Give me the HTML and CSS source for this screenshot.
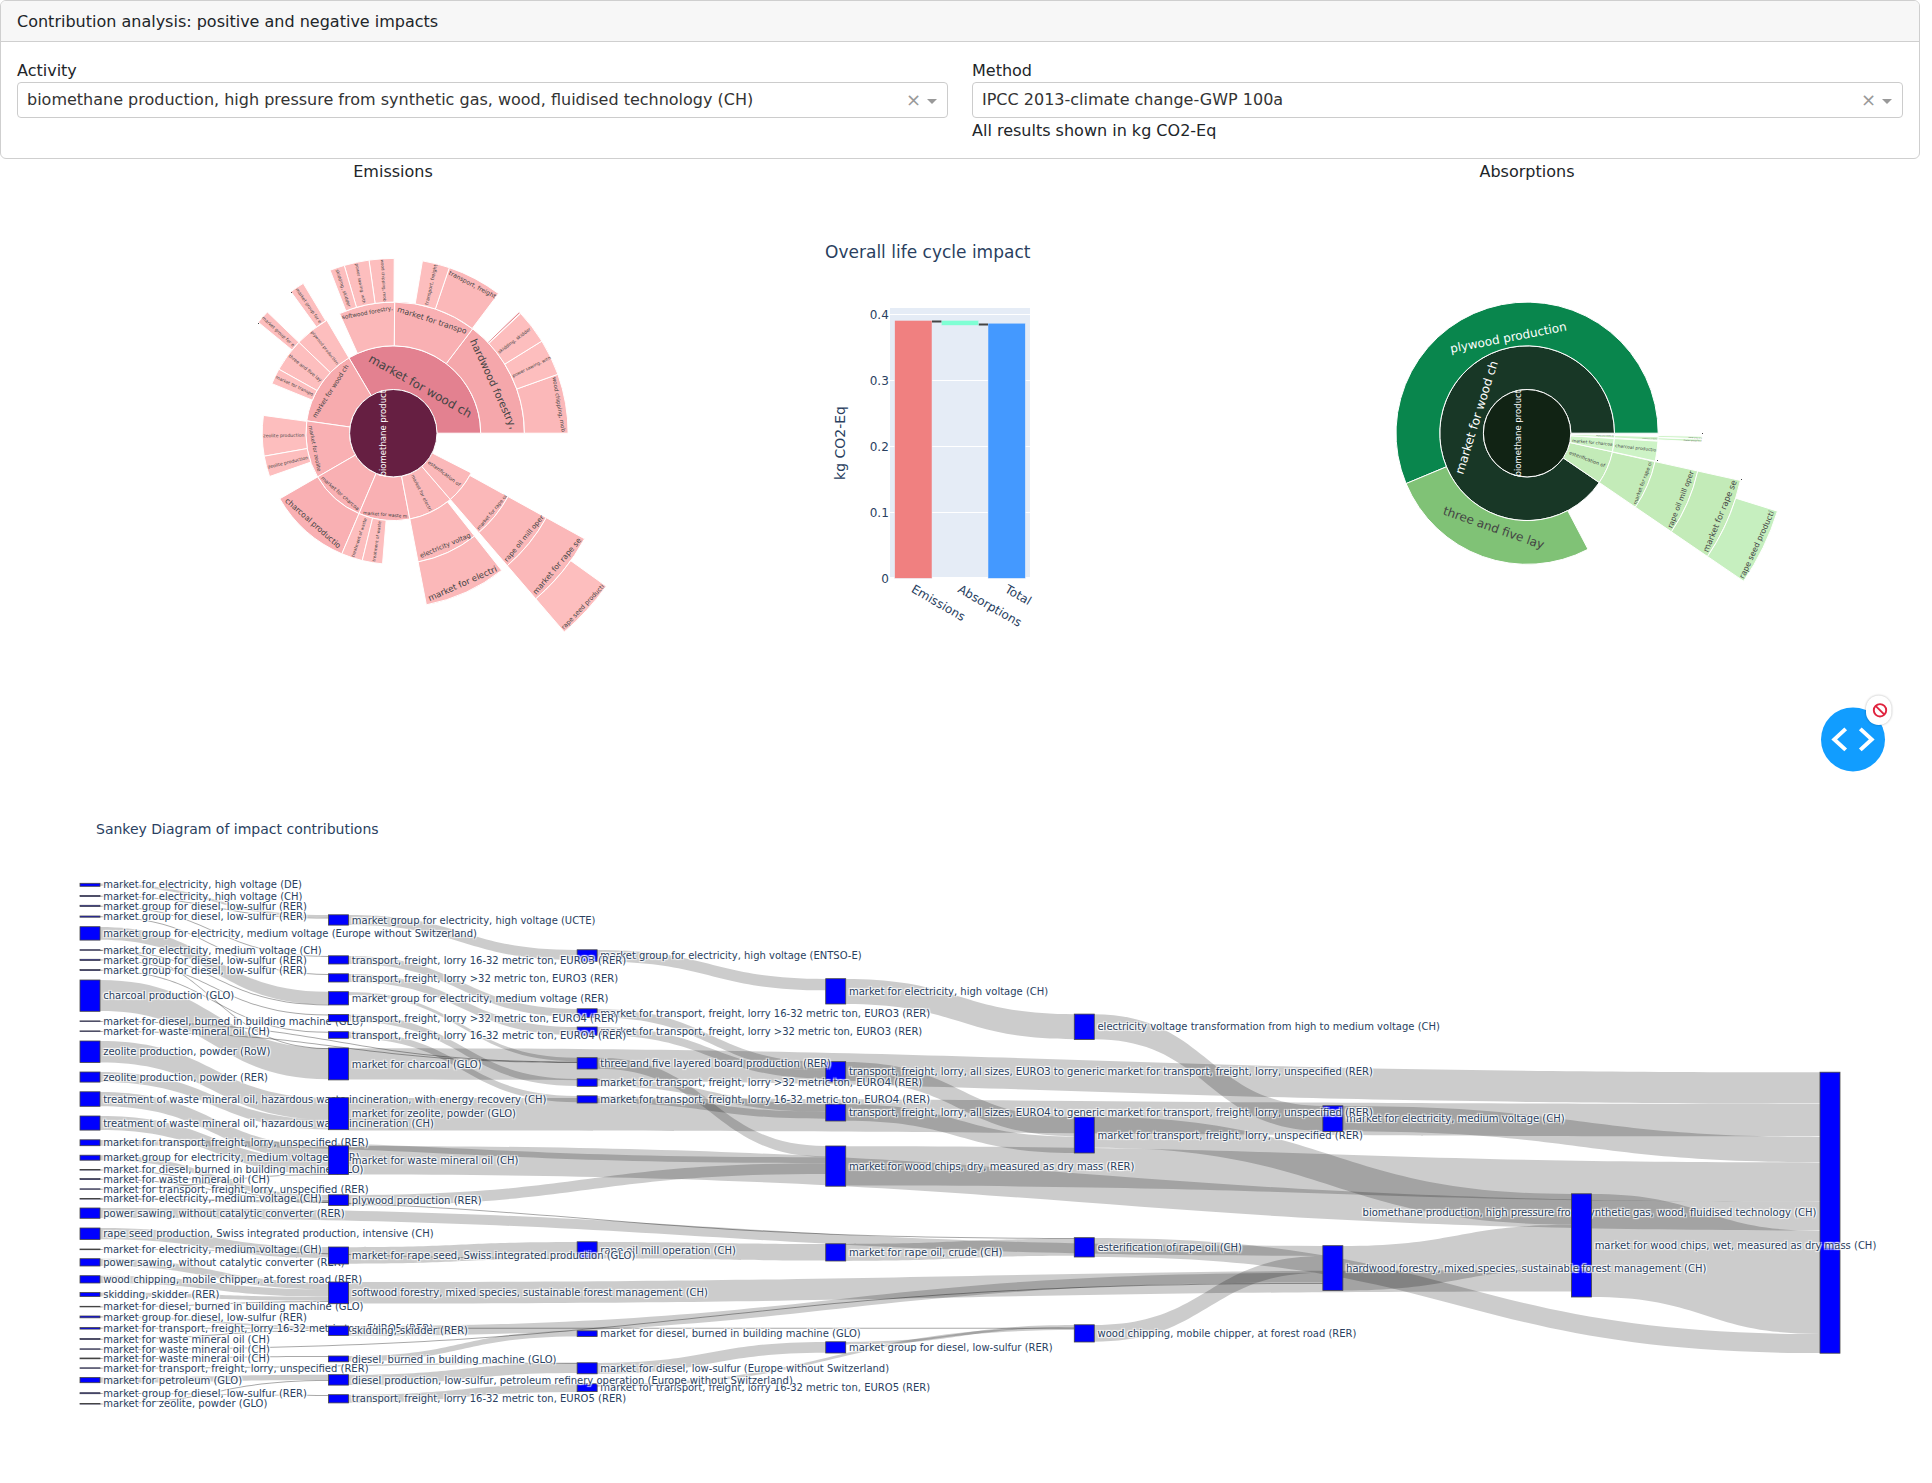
FILE: index.html
```html
<!DOCTYPE html>
<html lang="en">
<head>
<meta charset="utf-8">
<title>Contribution analysis</title>
<link rel="stylesheet" href="styles.css">
</head>
<body>
<main class="page">
  <section class="card">
    <header class="card-header">Contribution analysis: positive and negative impacts</header>
    <div class="card-body">
      <div class="field">
        <label>Activity</label>
        <div class="select"><span class="value">biomethane production, high pressure from synthetic gas, wood, fluidised technology (CH)</span><span class="clear">×</span><span class="arrow"></span></div>
      </div>
      <div class="field">
        <label>Method</label>
        <div class="select"><span class="value">IPCC 2013-climate change-GWP 100a</span><span class="clear">×</span><span class="arrow"></span></div>
        <div class="note">All results shown in kg CO2-Eq</div>
      </div>
    </div>
  </section>
  <section class="charts">
    <div class="chart-side">
      <div class="chart-title">Emissions</div>
      <svg id="emissions" class="chart" width="786" height="600" viewBox="0 183 786 600"></svg>
    </div>
    <svg id="overall" class="chart" width="348" height="624" viewBox="786 159 348 624">
      <rect x="890" y="308" width="140" height="270" fill="#e5ecf6"/>
      <path d="M890 314.5h140M890 380.5h140M890 446.5h140M890 512.5h140" stroke="#fff"/>
      <path d="M890 578h140" stroke="#fff" stroke-width="2"/>
      <g stroke="#e5ecf6" stroke-width=".5">
        <rect x="894.7" y="320.4" width="37.3" height="257.9" fill="#f08080"/>
        <rect x="941.3" y="320.4" width="37.4" height="5" fill="#7fffd4"/>
        <rect x="988" y="323.2" width="37.3" height="255.1" fill="#4499ff"/>
      </g>
      <path d="M932 321.5h9.4M978.8 324.5h9.2" stroke="#444" stroke-width="2"/>
      <text class="plot-title" x="825.1" y="257.9">Overall life cycle impact</text>
      <g class="tick" text-anchor="end">
        <text x="888.8" y="319">0.4</text><text x="888.8" y="385">0.3</text><text x="888.8" y="450.7">0.2</text><text x="888.8" y="516.6">0.1</text><text x="888.8" y="582.5">0</text>
      </g>
      <g class="tick">
        <text transform="translate(910.5 591.5) rotate(30)">Emissions</text>
        <text transform="translate(957 591.5) rotate(30)">Absorptions</text>
        <text transform="translate(1004 591.5) rotate(30)">Total</text>
      </g>
      <text class="axis-title" text-anchor="middle" transform="translate(844.8 443) rotate(-90)">kg CO2-Eq</text>
    </svg>
    <div class="chart-side">
      <div class="chart-title">Absorptions</div>
      <svg id="absorptions" class="chart" width="786" height="600" viewBox="1134 183 786 600"></svg>
    </div>
  </section>
  <svg id="sankey" class="chart" width="1920" height="700" viewBox="0 783 1920 700">
    <text class="sankey-title" x="96" y="833.5">Sankey Diagram of impact contributions</text>
  </svg>
</main>
<svg class="debug" width="90" height="90" viewBox="1815 690 90 90">
  <circle cx="1853" cy="739.4" r="32" fill="#119dff"/>
  <path d="M1845.7 728.9L1834.3 739.4L1845.7 749.9M1860.3 728.9L1871.7 739.4L1860.3 749.9" fill="none" stroke="#fff" stroke-width="4"/>
  <rect class="badge" x="1866" y="695.6" width="25.5" height="29.5" rx="12.75"/>
  <circle cx="1880" cy="710.3" r="6.2" fill="none" stroke="#e0233e" stroke-width="1.9"/>
  <path d="M1875.6 705.9l8.8 8.8" stroke="#e0233e" stroke-width="1.9"/>
</svg>
<script src="charts.js"></script>
</body>
</html>
```
FILE: styles.css
```css
* { box-sizing: border-box; }
body { margin: 0; background: #fff; color: #212529; font: 16px/24px "DejaVu Sans", sans-serif; overflow: hidden; }
.page { width: 1920px; display: flex; flex-direction: column; }
.card { height: 159px; border: 1px solid #cfcfcf; border-radius: 6px; overflow: hidden; }
.card-header { height: 41px; padding: 9px 16px 7px; background: #f7f7f7; border-bottom: 1px solid #cfcfcf; }
.card-body { display: flex; gap: 24px; padding: 16px; }
.field { flex: 1; }
.field label { display: block; padding-top: 1px; line-height: 23px; }
.field label, .note, .chart-title { height: 24px; line-height: 26px; padding: 0; }
.select { display: flex; align-items: center; height: 36px; padding: 0 10px 0 9px; border: 1px solid #ccc; border-radius: 4px; color: #333; }
.value { flex: 1; }
.clear { color: #999; font-size: 18px; line-height: 34px; margin-right: 6px; }
.arrow { border: 5px solid transparent; border-top-color: #999; border-bottom-width: 0; margin-top: 3px; }
.charts { display: flex; height: 624px; }
.chart-side { width: 786px; }
.chart-title { text-align: center; }
.chart { display: block; }
.plot-title { font-size: 17px; fill: #2a3f5f; }
.tick { font-size: 12px; fill: #2a3f5f; }
.axis-title { font-size: 14px; fill: #2a3f5f; }
.sankey-title { font-size: 14px; fill: #2a3f5f; }
.slice { stroke: #fff; stroke-width: 1; }
.link { fill: #000; fill-opacity: .2; }
.link.thin { fill-opacity: .34; }
.node { fill: #00f; stroke: #444; stroke-width: .8; }
.node-label { font-size: 10px; fill: #2a3f5f; text-shadow: -1px 1px 1px #fff, 1px 1px 1px #fff, 1px -1px 1px #fff, -1px -1px 1px #fff; }
.debug { position: absolute; left: 1815px; top: 690px; }
.badge { fill: #fff; filter: drop-shadow(0 0 1px rgba(0, 0, 0, .3)); }
```
FILE: charts.js
```js
const NS = "http://www.w3.org/2000/svg";
function add(parent, tag, attrs, text) {
  const el = document.createElementNS(NS, tag);
  for (const k in attrs) el.setAttribute(k, attrs[k]);
  if (text) el.textContent = text;
  parent.appendChild(el);
  return el;
}

/* ---- Sunbursts ---- */
const RING = 43.7;
// slices: [level, start angle, end angle, fill]
// labels: [text, x0, y0, x1, y1, fill], in thirds of a pixel from the origin
function sunburst(id, cx, cy, ox, oy, slices, labels, dots) {
  const svg = document.getElementById(id);
  for (const [level, a0, a1, fill] of slices) {
    if (level === 0) { add(svg, "circle", { class: "slice", cx, cy, r: RING, fill }); continue; }
    const r0 = level * RING, r1 = r0 + RING;
    const p = (r, a) => (cx + r * Math.cos(a * Math.PI / 180)).toFixed(2) + " " + (cy - r * Math.sin(a * Math.PI / 180)).toFixed(2);
    const big = a1 - a0 > 180 ? 1 : 0;
    add(svg, "path", { class: "slice", fill, d: `M${p(r0, a0)}L${p(r1, a0)}A${r1} ${r1} 0 ${big} 0 ${p(r1, a1)}L${p(r0, a1)}A${r0} ${r0} 0 ${big} 1 ${p(r0, a0)}Z` });
  }
  for (const [text, x0, y0, x1, y1, fill] of labels) {
    const len = Math.hypot(x1 - x0, y1 - y0) / 3;
    const angle = Math.atan2(y1 - y0, x1 - x0) * 180 / Math.PI;
    const g = add(svg, "g", {});
    const t = add(g, "text", { "font-size": 12, "text-anchor": "middle", y: 3.9, fill: fill || "#444" }, text);
    const s = len / t.getComputedTextLength();
    g.setAttribute("transform", `translate(${ox + (x0 + x1) / 6} ${oy + (y0 + y1) / 6}) rotate(${angle}) scale(${s})`);
  }
  for (const [x, y] of dots) add(svg, "rect", { x: Math.round(ox + x / 3), y: Math.round(oy + y / 3), width: 1, height: 1, fill: "#444" });
}

const P1 = "#f9b0b3", P2 = "#fbb8b9", P3 = "#fdbebe";
sunburst("emissions", 393.3, 433.2, 250.2, 240.5, [
  [1, 0, 120.5, "#e38190"], [1, 120.5, 171.9, "#f7abae"], [1, 171.9, 210, P1], [1, 210, 246.9, P1],
  [1, 246.9, 280.9, P1], [1, 280.9, 310.7, P2], [1, 310.7, 333, P2],
  [2, 0, 52.75, "#f5a7ab"], [2, 52.75, 89.4, P1], [2, 89.4, 114.2, P2],
  [2, 120.5, 136.1, P3], [2, 136.1, 150.8, P3], [2, 150.8, 157.8, P3],
  [2, 172.2, 190.1, P3], [2, 190.1, 199.3, P3], [2, 210, 246.9, P1],
  [2, 246.9, 256.3, P3], [2, 256.3, 265.3, P3], [2, 280.9, 308.3, P2], [2, 310.7, 331.1, P2],
  [3, 0, 19.7, P2], [3, 19.7, 31.8, P3], [3, 31.8, 43.2, P3], [3, 43.4, 44, "#e58c92"],
  [3, 53, 71.3, P2], [3, 71.3, 80.4, P3],
  [3, 89.7, 98, P3], [3, 98, 106.3, P3], [3, 106.3, 111.2, P3],
  [3, 121, 125.9, P3], [3, 136.1, 140.6, P3], [3, 280.9, 308.3, P2], [3, 310.7, 331.1, P2],
  [4, 310.7, 331.1, P2], [5, 310.7, 324.3, P3], [0, 0, 360, "#661f42"]
], [
  ["biomethane product", 399, 708, 399, 448, "#fff"],
  ["market for wood ch", 358, 352, 662, 523], ["hardwood forestry,", 668, 297, 791, 564],
  ["market for transpo", 442, 206, 649, 273], ["softwood forestry,", 275, 231, 428, 202],
  ["wood chipping, mob", 912, 409, 940, 574], ["power sawing, with", 787, 407, 901, 351],
  ["skidding, skidder", 745, 336, 840, 264], ["transport, freight", 597, 96, 736, 169],
  ["transport, freight", 529, 193, 557, 72], ["wood chipping, mob", 396, 57, 404, 183],
  ["power sawing, with", 319, 69, 342, 189], ["skidding, skidder", 260, 87, 297, 199],
  ["market for wood ch", 191, 530, 291, 374], ["plywood production", 185, 273, 263, 371],
  ["three and five lay", 117, 345, 213, 421], ["market for transpo", 77, 409, 189, 462],
  ["market group for e", 139, 144, 211, 247], ["market group for e", 37, 230, 131, 316],
  ["market for zeolite", 180, 555, 207, 693], ["zeolite production", 39, 586, 163, 584],
  ["zeolite production", 53, 680, 173, 651], ["market for charcoa", 215, 711, 325, 807],
  ["charcoal productio", 108, 777, 269, 919], ["market for waste m", 339, 817, 471, 828],
  ["treatment of waste", 308, 949, 346, 833], ["treatment of waste", 371, 963, 389, 842],
  ["market for electri", 486, 703, 541, 811], ["electricity voltag", 510, 947, 660, 883],
  ["market for electri", 535, 1075, 739, 984], ["esterification of", 535, 664, 629, 734],
  ["market for rape oi", 683, 866, 767, 765], ["rape oil mill oper", 766, 961, 877, 827],
  ["market for rape se", 852, 1059, 989, 895], ["rape seed producti", 937, 1164, 1059, 1034]
], [[121, 153], [22, 246]]);

const G1 = "#c3ebb8", G2 = "#cdf3c6";
sunburst("absorptions", 1527.1, 433.2, 1380.2, 280.5, [
  [1, 0, 325.65, "#183726"], [1, 325.65, 347.7, G1], [1, 347.7, 356.5, G2], [1, 356.8, 358.5, G2],
  [2, 0, 202.6, "#09864d"], [2, 202.6, 297.7, "#80c276"], [2, 325.65, 347.5, G1], [2, 347.7, 356.5, G2],
  [2, 356.9, 358.5, G2], [3, 325.65, 347.5, G1], [3, 357.1, 358, G2], [3, 358.2, 359, G2],
  [4, 325.65, 347.5, G1], [5, 325.65, 342.7, "#c6efbf"], [0, 0, 360, "#112314"]
], [
  ["biomethane product", 413, 588, 413, 328, "#fff"], ["market for wood ch", 237, 580, 342, 242, "#fff"],
  ["plywood production", 210, 206, 559, 138, "#fff"], ["three and five lay", 190, 690, 491, 795],
  ["market for charcoa", 576, 480, 697, 492], ["charcoal productio", 705, 495, 828, 509],
  ["esterification of", 567, 516, 674, 556], ["market for rape oi", 764, 671, 811, 544],
  ["rape oil mill oper", 869, 742, 935, 572], ["market for rape se", 976, 814, 1063, 600],
  ["rape seed producti", 1084, 893, 1176, 692], ["market for waste m", 648, 465, 701, 466],
  ["treatment of waste", 786, 474, 831, 475], ["market group for e", 925, 471, 965, 473],
  ["market group for e", 910, 479, 965, 481]
], [[966, 457], [1083, 594], [829, 539]]);

/* ---- Sankey ---- */
const colX = c => 80 + c * 248.571;
const NW = 20;
// id: [column, top, bottom, label]
const nodes = {
  x: [7, 1071.7, 1352.7, "biomethane production, high pressure from synthetic gas, wood, fluidised technology (CH)"],
  z1: [0, 882.8, 885.8, "market for electricity, high voltage (DE)"],
  z2: [0, 895, 896, "market for electricity, high voltage (CH)"],
  z3: [0, 904.8, 906, "market group for diesel, low-sulfur (RER)"],
  z4: [0, 915.5, 916.7, "market group for diesel, low-sulfur (RER)"],
  z5: [0, 926.2, 939.6, "market group for electricity, medium voltage (Europe without Switzerland)"],
  z6: [0, 949.2, 949.8, "market for electricity, medium voltage (CH)"],
  z7: [0, 958.8, 960, "market group for diesel, low-sulfur (RER)"],
  z8: [0, 969.1, 970.1, "market group for diesel, low-sulfur (RER)"],
  z9: [0, 979.5, 1010.8, "charcoal production (GLO)"],
  z10: [0, 1020.4, 1021, "market for diesel, burned in building machine (GLO)"],
  z11: [0, 1030.4, 1031, "market for waste mineral oil (CH)"],
  z12: [0, 1040.5, 1062, "zeolite production, powder (RoW)"],
  z13: [0, 1071.5, 1081.6, "zeolite production, powder (RER)"],
  z14: [0, 1091.3, 1105.8, "treatment of waste mineral oil, hazardous waste incineration, with energy recovery (CH)"],
  z15: [0, 1115.5, 1129.6, "treatment of waste mineral oil, hazardous waste incineration (CH)"],
  z16: [0, 1139.3, 1145.2, "market for transport, freight, lorry, unspecified (RER)"],
  z17: [0, 1154.7, 1159.7, "market group for electricity, medium voltage (RER)"],
  z18: [0, 1169, 1169.6, "market for diesel, burned in building machine (GLO)"],
  z19: [0, 1178.1, 1179.1, "market for waste mineral oil (CH)"],
  z20: [0, 1188.3, 1188.8, "market for transport, freight, lorry, unspecified (RER)"],
  z21: [0, 1198, 1198.6, "market for electricity, medium voltage (CH)"],
  z22: [0, 1207.5, 1217.8, "power sawing, without catalytic converter (RER)"],
  z23: [0, 1227.5, 1239, "rape seed production, Swiss integrated production, intensive (CH)"],
  z24: [0, 1248.5, 1249.2, "market for electricity, medium voltage (CH)"],
  z25: [0, 1258.2, 1265.5, "power sawing, without catalytic converter (RER)"],
  z26: [0, 1275.2, 1282.5, "wood chipping, mobile chipper, at forest road (RER)"],
  z27: [0, 1292, 1296, "skidding, skidder (RER)"],
  z28: [0, 1305.8, 1306.4, "market for diesel, burned in building machine (GLO)"],
  z29: [0, 1315.5, 1317.3, "market group for diesel, low-sulfur (RER)"],
  z30: [0, 1327, 1328.6, "market for transport, freight, lorry 16-32 metric ton, EURO5 (RER)"],
  z31: [0, 1338, 1339, "market for waste mineral oil (CH)"],
  z32: [0, 1348.3, 1348.8, "market for waste mineral oil (CH)"],
  z33: [0, 1357.5, 1358.3, "market for waste mineral oil (CH)"],
  z34: [0, 1367.3, 1367.8, "market for transport, freight, lorry, unspecified (RER)"],
  z35: [0, 1377, 1382.2, "market for petroleum (GLO)"],
  z36: [0, 1392.2, 1393.2, "market group for diesel, low-sulfur (RER)"],
  z37: [0, 1403, 1403.6, "market for zeolite, powder (GLO)"],
  w: [6, 1193.3, 1296.5, "market for wood chips, wet, measured as dry mass (CH)"],
  v: [5, 1245.2, 1290, "hardwood forestry, mixed species, sustainable forest management (CH)"],
  r: [4, 1116.5, 1152.5, "market for transport, freight, lorry, unspecified (RER)"],
  u: [5, 1105.3, 1130.9, "market for electricity, medium voltage (CH)"],
  q: [4, 1013.6, 1039, "electricity voltage transformation from high to medium voltage (CH)"],
  s: [4, 1237.2, 1256.5, "esterification of rape oil (CH)"],
  t: [4, 1324.3, 1341.5, "wood chipping, mobile chipper, at forest road (RER)"],
  k: [3, 978.2, 1003.5, "market for electricity, high voltage (CH)"],
  l: [3, 1061.2, 1081.5, "transport, freight, lorry, all sizes, EURO3 to generic market for transport, freight, lorry, unspecified (RER)"],
  m: [3, 1103.6, 1120.5, "transport, freight, lorry, all sizes, EURO4 to generic market for transport, freight, lorry, unspecified (RER)"],
  n: [3, 1145.5, 1185.7, "market for wood chips, dry, measured as dry mass (RER)"],
  o: [3, 1243.3, 1260.5, "market for rape oil, crude (CH)"],
  p: [3, 1341.3, 1352.5, "market group for diesel, low-sulfur (RER)"],
  a: [2, 949.3, 961, "market group for electricity, high voltage (ENTSO-E)"],
  b: [2, 1008.3, 1017, "market for transport, freight, lorry 16-32 metric ton, EURO3 (RER)"],
  c: [2, 1026.5, 1034.8, "market for transport, freight, lorry >32 metric ton, EURO3 (RER)"],
  d: [2, 1057.2, 1068.5, "three and five layered board production (RER)"],
  e: [2, 1078.3, 1085.8, "market for transport, freight, lorry >32 metric ton, EURO4 (RER)"],
  f: [2, 1095.3, 1102.5, "market for transport, freight, lorry 16-32 metric ton, EURO4 (RER)"],
  g: [2, 1241.3, 1258, "rape oil mill operation (CH)"],
  h: [2, 1330.3, 1336, "market for diesel, burned in building machine (GLO)"],
  i: [2, 1362.3, 1373.3, "market for diesel, low-sulfur (Europe without Switzerland)"],
  j: [2, 1383.3, 1391.1, "market for transport, freight, lorry 16-32 metric ton, EURO5 (RER)"],
  A: [1, 914.3, 924.6, "market group for electricity, high voltage (UCTE)"],
  B: [1, 955.3, 963.5, "transport, freight, lorry 16-32 metric ton, EURO3 (RER)"],
  C: [1, 973.3, 981.5, "transport, freight, lorry >32 metric ton, EURO3 (RER)"],
  D: [1, 991.2, 1004.4, "market group for electricity, medium voltage (RER)"],
  E: [1, 1014, 1021.2, "transport, freight, lorry >32 metric ton, EURO4 (RER)"],
  F: [1, 1031.2, 1037.8, "transport, freight, lorry 16-32 metric ton, EURO4 (RER)"],
  G: [1, 1047.5, 1079.4, "market for charcoal (GLO)"],
  H: [1, 1097.2, 1129.2, "market for zeolite, powder (GLO)"],
  I: [1, 1145.3, 1174, "market for waste mineral oil (CH)"],
  J: [1, 1194.3, 1205, "plywood production (RER)"],
  K: [1, 1246.5, 1263.5, "market for rape seed, Swiss integrated production (GLO)"],
  L: [1, 1281.5, 1303.2, "softwood forestry, mixed species, sustainable forest management (CH)"],
  M: [1, 1325.5, 1335, "skidding, skidder (RER)"],
  N: [1, 1355.5, 1361.3, "diesel, burned in building machine (GLO)"],
  O: [1, 1374.2, 1384.6, "diesel production, low-sulfur, petroleum refinery operation (Europe without Switzerland)"],
  P: [1, 1394.2, 1402.4, "transport, freight, lorry 16-32 metric ton, EURO5 (RER)"]
};
// [source, source y, target, target y, width]
const links = [
  ["z1", 883, "A", 914.5, 2.4], ["z2", 895.2, "A", 917, .7], ["z3", 905.2, "B", 955.4, .5], ["z4", 915.8, "C", 973.5, .8],
  ["z5", 926.4, "D", 991.3, 12.8], ["z6", 949.3, "D", 1003.9, .6],
  ["z7", 959, "E", 1014, .9], ["z8", 969.2, "F", 1031.3, .8], ["z9", 979.6, "G", 1047.7, 31],
  ["z10", 1020.5, "d", 1061, .6], ["z11", 1030.5, "d", 1061.5, .6], ["z6", 949.4, "G", 1047.5, .4],
  ["z12", 1040.5, "H", 1097.5, 21.5], ["z13", 1071.5, "H", 1119, 10],
  ["z14", 1091.4, "I", 1145.4, 14.3], ["z15", 1115.5, "I", 1159.8, 14],
  ["z16", 1139.4, "n", 1156.7, 5.8], ["z17", 1154.8, "J", 1194.4, 4.9], ["z18", 1169.1, "J", 1199.4, .5],
  ["z19", 1178.3, "J", 1200.4, .7], ["z20", 1188.3, "I", 1173.6, .5], ["z21", 1198, "s", 1237.4, .7],
  ["z21", 1198, "J", 1201.4, .5],
  ["z22", 1207.6, "v", 1245.4, 10], ["z23", 1227.6, "K", 1246.6, 11.2], ["z24", 1248.6, "g", 1257.5, .5],
  ["z25", 1258.3, "L", 1281.7, 7.2], ["z26", 1275.3, "L", 1289, 7.2], ["z27", 1292, "L", 1296.4, 4],
  ["z28", 1305.9, "L", 1300.6, .5], ["z29", 1315.6, "M", 1325.6, 1.6], ["z30", 1327.2, "t", 1327.2, .6],
  ["z31", 1338.2, "M", 1329.6, .6], ["z32", 1348.3, "v", 1282.4, .8], ["z33", 1357.6, "N", 1355.6, .6],
  ["z34", 1367.3, "i", 1362.3, .5], ["z35", 1377.1, "O", 1374.3, 5.1], ["z36", 1392.4, "P", 1394.4, .6],
  ["z37", 1403, "O", 1379.4, .5],
  ["A", 914.4, "a", 949.4, 10.1], ["B", 955.4, "b", 1008.4, 8], ["C", 973.4, "c", 1026.6, 8],
  ["D", 991.4, "d", 1057.3, 3.4], ["E", 1014.1, "e", 1078.4, 7], ["F", 1031.3, "f", 1095.4, 6.4],
  ["G", 1047.7, "x", 1071.8, 31.2], ["H", 1097.5, "x", 1103.4, 32.4], ["I", 1145.4, "x", 1201.4, 28.6],
  ["J", 1194.4, "n", 1162.7, 10.7], ["K", 1246.7, "g", 1241.5, 16.5], ["L", 1281.6, "w", 1269.5, 21.4],
  ["M", 1325.6, "v", 1272.3, 9.6], ["N", 1355.6, "h", 1330.4, 5.5], ["O", 1374.3, "i", 1362.4, 10.2], ["P", 1394.3, "j", 1383.4, 8],
  ["a", 949.5, "k", 978.4, 11.4], ["b", 1008.5, "l", 1061.4, 8.4], ["c", 1026.6, "l", 1069.8, 8.1],
  ["d", 1057.3, "n", 1145.5, 11], ["e", 1078.4, "m", 1103.8, 7.3], ["f", 1095.4, "m", 1111.2, 7],
  ["g", 1241.5, "o", 1243.4, 16.5], ["i", 1362.4, "p", 1341.4, 10.9], ["j", 1383.4, "t", 1326.8, 2.8],
  ["k", 978.4, "q", 1013.7, 25], ["l", 1061.4, "r", 1116.7, 19], ["m", 1103.8, "r", 1136, 16.5],
  ["n", 1145.7, "x", 1161.9, 39.4], ["o", 1243.4, "s", 1238.3, 17], ["p", 1341.4, "t", 1324.6, 2.6],
  ["q", 1013.8, "u", 1105.5, 25], ["r", 1116.6, "w", 1193.4, 30.6], ["s", 1237.4, "x", 1333.6, 19],
  ["t", 1324.5, "v", 1255.5, 16.7], ["u", 1105.5, "x", 1136.4, 25.2], ["v", 1245.4, "w", 1224.3, 44.7],
  ["w", 1193.4, "x", 1230.4, 103]
];
const sk = add(document.getElementById("sankey"), "g", { transform: "translate(0 .5)" });
for (const [s, y0, t, y1, width] of links) {
  const thin = width < 1, h = thin ? 1 : width;
  const x0 = colX(nodes[s][0]) + NW, x1 = colX(nodes[t][0]), m = (x0 + x1) / 2;
  add(sk, "path", { class: thin ? "link thin" : "link", d: `M${x0} ${y0}C${m} ${y0} ${m} ${y1} ${x1} ${y1}V${y1 + h}C${m} ${y1 + h} ${m} ${y0 + h} ${x0} ${y0 + h}Z` });
}
for (const id in nodes) {
  const [c, top, bottom, label] = nodes[id], x = colX(c), last = c === 7;
  add(sk, "rect", { class: "node", x, y: top, width: NW, height: bottom - top });
  add(sk, "text", { class: "node-label", x: last ? x - 3.5 : x + NW + 3.2, y: (top + bottom) / 2 + 3.6, "text-anchor": last ? "end" : "start" }, label);
}
```
